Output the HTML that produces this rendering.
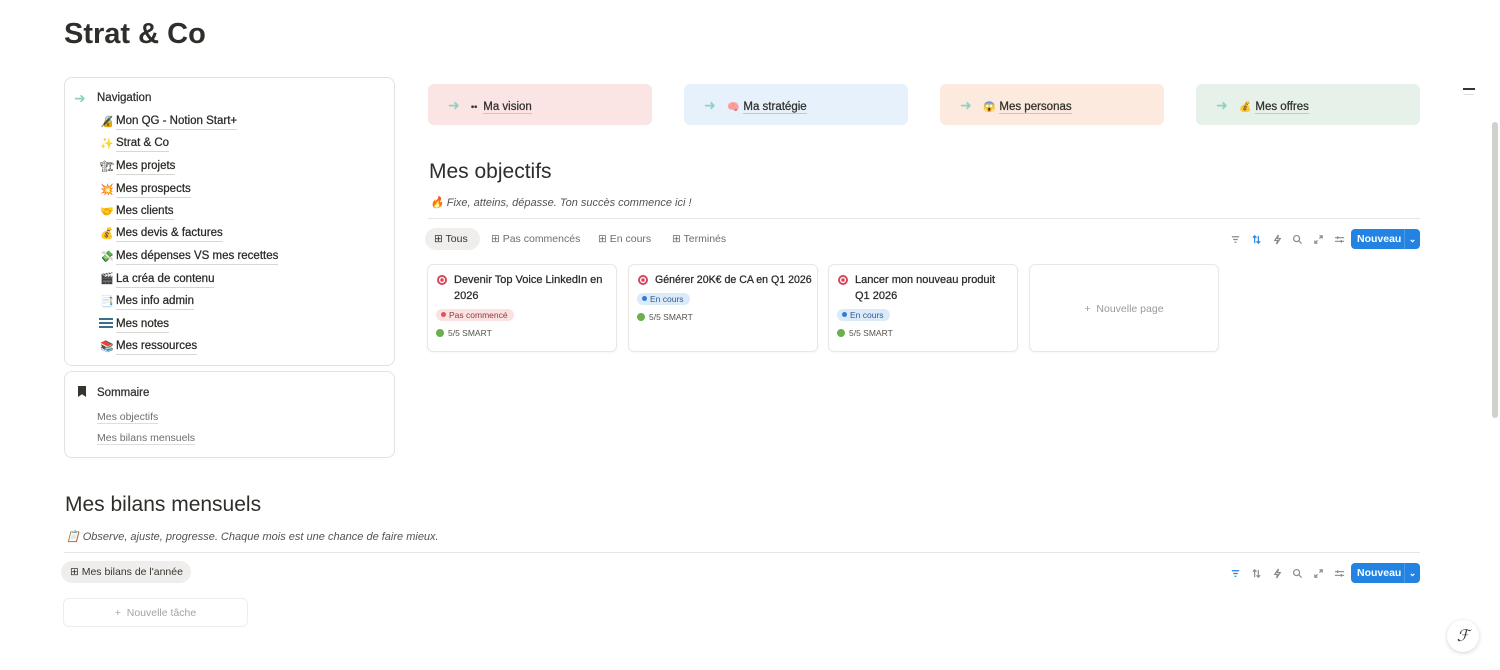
<!DOCTYPE html>
<html><head><meta charset="utf-8"><style>
*{margin:0;padding:0;box-sizing:border-box}
body{width:1500px;height:670px;background:#fff;font-family:"Liberation Sans","Noto Sans CJK JP",sans-serif;color:#37352f;position:relative;overflow:hidden}
.a{position:absolute}
h1{position:absolute;left:64px;top:18px;font-size:29px;font-weight:700;color:#2f2e2b}
.box{position:absolute;border:1px solid #e3e2df;border-radius:8px;background:#fff}
.nav{position:absolute;left:116px;font-size:11.5px;font-weight:400;color:#2a2926;border-bottom:1px solid #d8d7d3;line-height:15px;-webkit-text-stroke:0.25px #2a2926}
.ic{position:absolute;left:100px;font-size:11px}
.co{position:absolute;top:84px;width:224px;height:41px;border-radius:6px;font-size:11.5px;font-weight:400;padding:13px 0 0 20px;-webkit-text-stroke:0.25px #2a2926}
.co .ar{color:#8fd0c4;font-size:14px;margin-right:8px;-webkit-text-stroke:0}
.co .t{border-bottom:1px solid #c8c7c2}
h2{position:absolute;font-size:21px;font-weight:400;color:#2f2e2b}
.it{position:absolute;font-size:11px;font-style:italic;color:#55534e}
.hr{position:absolute;height:1px;background:#e6e5e2}
.tab{position:absolute;font-size:10.5px;color:#6f6e69}
.card{position:absolute;top:264px;width:190px;height:88px;border:1px solid #e8e7e4;border-radius:6px;box-shadow:0 1px 2px rgba(0,0,0,.04);padding:7px 8px}
.card .ti{font-size:11px;font-weight:400;color:#2a2926;line-height:16px;padding-left:18px;position:relative;-webkit-text-stroke:0.25px #2a2926}
.card .ti:before{content:"";position:absolute;left:1px;top:3px;width:10px;height:10px;border-radius:50%;background:radial-gradient(circle,#d6465a 0 1.5px,#fff 2px 2.8px,#d6465a 3.2px)}
.tag{display:inline-block;font-size:8.5px;padding:1px 6px 1px 5px;border-radius:8px;margin-top:5px}
.tag i{display:inline-block;width:5px;height:5px;border-radius:50%;margin-right:3px;vertical-align:1px}
.sm{font-size:8.5px;color:#55534e;margin-top:5px}
.sm i{display:inline-block;width:8px;height:8px;border-radius:50%;background:#6ab04c;margin-right:4px;vertical-align:-1px}
.tools{position:absolute;left:1230px;width:115px;height:20px;display:flex;align-items:center;justify-content:space-between;color:#8a8985}
.tools svg{width:11px;height:11px;stroke:#8a8985;fill:none;stroke-width:1.3}
.btn{position:absolute;width:69px;height:20px;background:#2383e2;border-radius:4px;color:#fff;font-size:10.5px;font-weight:600;padding:4px 0 0 6px}
.btn span{position:absolute;right:0;top:0;width:16px;height:20px;border-left:1px solid #4b9ae8;text-align:center;font-size:9px;padding-top:5px}
</style></head><body>
<h1>Strat &amp; Co</h1>

<div class="box" style="left:64px;top:77px;width:331px;height:289px"></div>
<div class="a" style="left:74px;top:90px;color:#8fd0c4;font-size:14px">➜</div>
<div class="a" style="left:97px;top:92px;font-size:11.5px;-webkit-text-stroke:0.25px #2a2926">Navigation</div>
<div class="ic" style="top:115px">🔏</div><div class="nav" style="top:114px">Mon QG - Notion Start+</div>
<div class="ic" style="top:137px;color:#f3b33d">✨</div><div class="nav" style="top:136px">Strat &amp; Co</div>
<div class="ic" style="top:160px">🏗</div><div class="nav" style="top:159px">Mes projets</div>
<div class="ic" style="top:183px">💥</div><div class="nav" style="top:182px">Mes prospects</div>
<div class="ic" style="top:205px">🤝</div><div class="nav" style="top:204px">Mes clients</div>
<div class="ic" style="top:227px">💰</div><div class="nav" style="top:226px">Mes devis &amp; factures</div>
<div class="ic" style="top:250px">💸</div><div class="nav" style="top:249px">Mes dépenses VS mes recettes</div>
<div class="ic" style="top:272px">🎬</div><div class="nav" style="top:272px">La créa de contenu</div>
<div class="ic" style="top:295px">📑</div><div class="nav" style="top:294px">Mes info admin</div>
<div class="a" style="left:99px;top:318px;width:14px;height:10px;border-top:2px solid #3c6e8f;border-bottom:2px solid #3c6e8f"><div style="margin-top:2px;height:2px;background:#3c6e8f"></div></div><div class="nav" style="top:317px">Mes notes</div>
<div class="ic" style="top:340px">📚</div><div class="nav" style="top:339px">Mes ressources</div>

<div class="box" style="left:64px;top:371px;width:331px;height:87px"></div>
<div class="a" style="left:78px;top:386px;width:8px;height:11px;background:#37352f;clip-path:polygon(0 0,100% 0,100% 100%,50% 75%,0 100%)"></div>
<div class="a" style="left:97px;top:387px;font-size:11.5px;-webkit-text-stroke:0.25px #2a2926">Sommaire</div>
<div class="a" style="left:97px;top:411px;font-size:10.5px;color:#6f6e69;border-bottom:1px solid #ddd">Mes objectifs</div>
<div class="a" style="left:97px;top:432px;font-size:10.5px;color:#6f6e69;border-bottom:1px solid #ddd">Mes bilans mensuels</div>

<div class="co" style="left:428px;background:#fbe4e4"><span class="ar">➜</span> <span style="font-size:9px;margin-right:6px">••</span><span class="t">Ma vision</span></div>
<div class="co" style="left:684px;background:#e7f1fb"><span class="ar">➜</span> <span style="font-size:10px;margin-right:4px">🧠</span><span class="t">Ma stratégie</span></div>
<div class="co" style="left:940px;background:#fbeadd"><span class="ar">➜</span> <span style="font-size:10px;margin-right:4px">😱</span><span class="t">Mes personas</span></div>
<div class="co" style="left:1196px;background:#e6f1ea"><span class="ar">➜</span> <span style="font-size:10px;margin-right:4px">💰</span><span class="t">Mes offres</span></div>

<h2 style="left:429px;top:160px">Mes objectifs</h2>
<div class="it" style="left:430px;top:196px">🔥 Fixe, atteins, dépasse. Ton succès commence ici !</div>
<div class="hr" style="left:428px;top:218px;width:992px"></div>
<div class="a" style="left:425px;top:228px;width:55px;height:22px;background:#efeeec;border-radius:11px"></div>
<div class="tab" style="left:434px;top:233px;color:#37352f">⊞ Tous</div>
<div class="tab" style="left:491px;top:233px">⊞ Pas commencés</div>
<div class="tab" style="left:598px;top:233px">⊞ En cours</div>
<div class="tab" style="left:672px;top:233px">⊞ Terminés</div>
<div class="tools" style="top:229px">
<svg viewBox="0 0 12 12"><path d="M2 3h8M3.5 6h5M5 9h2"/></svg>
<svg viewBox="0 0 12 12" style="stroke:#2383e2"><path d="M4 10V2M2 4l2-2 2 2M8 2v8M6 8l2 2 2-2"/></svg>
<svg viewBox="0 0 12 12"><path d="M7 1L3 7h3l-1 4 4-6H6z"/></svg>
<svg viewBox="0 0 12 12"><circle cx="5" cy="5" r="3.3"/><path d="M7.5 7.5L10.5 10.5"/></svg>
<svg viewBox="0 0 12 12"><path d="M7 2h3v3M10 2L7 5M5 10H2V7M2 10l3-3"/></svg>
<svg viewBox="0 0 12 12"><path d="M1 4h10M1 8h10M4 2.5v3M8 6.5v3"/></svg>
</div>
<div class="btn" style="left:1351px;top:229px">Nouveau<span>⌄</span></div>

<div class="card" style="left:427px"><div class="ti">Devenir Top Voice LinkedIn en 2026</div>
<div class="tag" style="background:#fbe2e2;color:#8a3b3b"><i style="background:#e0525b"></i>Pas commencé</div>
<div class="sm"><i></i>5/5 SMART</div></div>
<div class="card" style="left:628px"><div class="ti" style="white-space:nowrap;font-size:10.6px">Générer 20K€ de CA en Q1 2026</div>
<div class="tag" style="background:#dbeaf8;color:#2f5d8a"><i style="background:#2e7cd6"></i>En cours</div>
<div class="sm"><i></i>5/5 SMART</div></div>
<div class="card" style="left:828px"><div class="ti">Lancer mon nouveau produit Q1 2026</div>
<div class="tag" style="background:#dbeaf8;color:#2f5d8a"><i style="background:#2e7cd6"></i>En cours</div>
<div class="sm"><i></i>5/5 SMART</div></div>
<div class="card" style="left:1029px;text-align:center;padding-top:38px;font-size:10.5px;color:#9b9a97">+ &nbsp;Nouvelle page</div>

<h2 style="left:65px;top:493px">Mes bilans mensuels</h2>
<div class="it" style="left:66px;top:530px">📋 Observe, ajuste, progresse. Chaque mois est une chance de faire mieux.</div>
<div class="hr" style="left:64px;top:552px;width:1356px"></div>
<div class="a" style="left:61px;top:561px;width:130px;height:22px;background:#efeeec;border-radius:11px"></div>
<div class="tab" style="left:70px;top:566px;color:#37352f">⊞ Mes bilans de l'année</div>
<div class="tools" style="top:563px">
<svg viewBox="0 0 12 12" style="stroke:#2383e2"><path d="M2 3h8M3.5 6h5M5 9h2"/></svg>
<svg viewBox="0 0 12 12"><path d="M4 10V2M2 4l2-2 2 2M8 2v8M6 8l2 2 2-2"/></svg>
<svg viewBox="0 0 12 12"><path d="M7 1L3 7h3l-1 4 4-6H6z"/></svg>
<svg viewBox="0 0 12 12"><circle cx="5" cy="5" r="3.3"/><path d="M7.5 7.5L10.5 10.5"/></svg>
<svg viewBox="0 0 12 12"><path d="M7 2h3v3M10 2L7 5M5 10H2V7M2 10l3-3"/></svg>
<svg viewBox="0 0 12 12"><path d="M1 4h10M1 8h10M4 2.5v3M8 6.5v3"/></svg>
</div>
<div class="btn" style="left:1351px;top:563px">Nouveau<span>⌄</span></div>
<div class="a" style="left:63px;top:598px;width:185px;height:29px;border:1px solid #eeedeb;border-radius:6px;text-align:center;padding-top:8px;font-size:10.5px;color:#a5a4a0">+ &nbsp;Nouvelle tâche</div>

<div class="a" style="left:1463px;top:88px;width:12px;height:2px;background:#37352f"></div>
<div class="a" style="left:1464px;top:94px;width:10px;height:1px;background:#ddd"></div>
<div class="a" style="left:1492px;top:122px;width:6px;height:296px;background:#d3d1cb;border-radius:3px"></div>
<div class="a" style="left:1447px;top:620px;width:32px;height:32px;border-radius:50%;background:#fff;box-shadow:0 1px 4px rgba(0,0,0,.18);text-align:center;font-size:16px;padding-top:6px;font-family:'Liberation Serif',serif;font-style:italic">ℱ</div>
</body></html>
